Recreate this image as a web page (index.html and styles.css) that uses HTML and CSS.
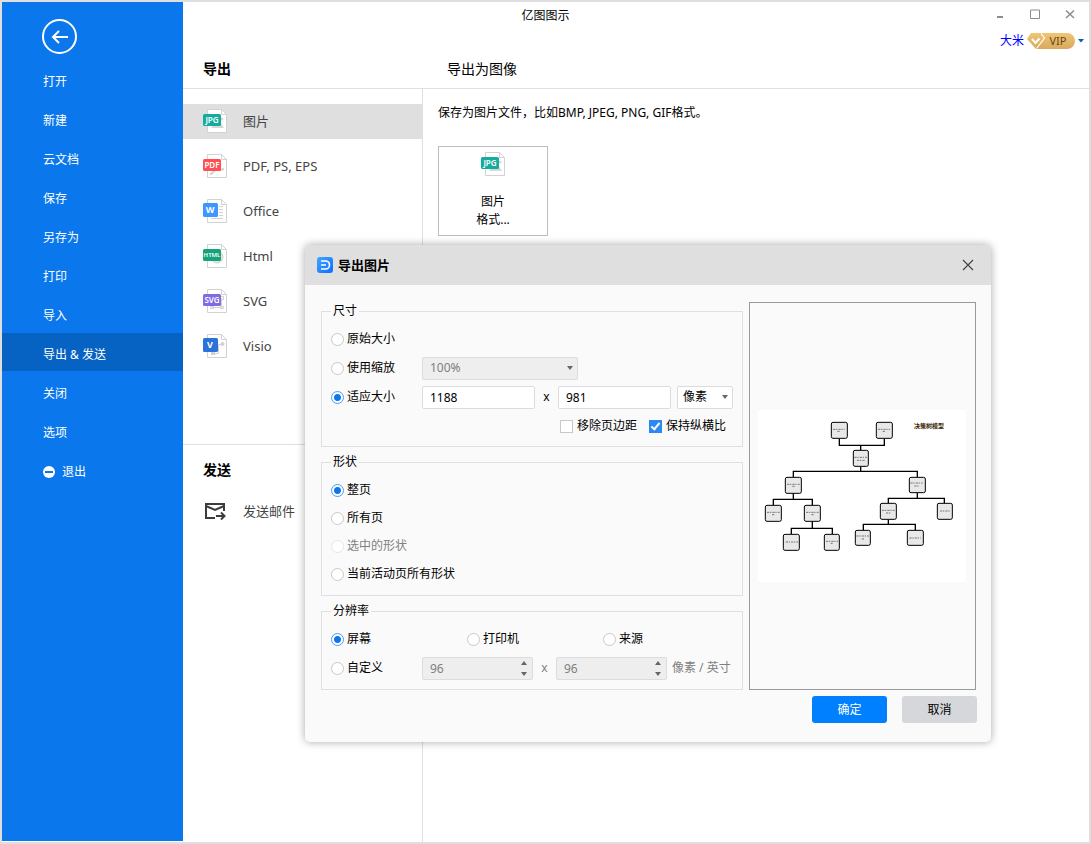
FILE: index.html
```
<!DOCTYPE html>
<html lang="zh-CN">
<head>
    <meta charset="UTF-8">
    <meta name="viewport" content="width=device-width, initial-scale=1.0">
    <title>亿图图示</title>
    <link rel="stylesheet" href="styles.css">
</head>
<body>
    <!-- Shared icon shapes -->
    <svg class="sprite" aria-hidden="true">
        <symbol id="page" viewBox="0 0 24 24">
            <path d="M4.500 .5H18.500L23.500 5.500V23.500H4.500Z" fill="#fff" stroke="#d2d2d2"/>
            <path d="M18.500 .5V5.500H23.500" fill="none" stroke="#d2d2d2"/>
        </symbol>
        <symbol id="picture" viewBox="0 0 24 24">
            <use href="#page"/>
            <path d="M8 19L13 12L16 16L18 14L21 19Z" fill="#d8d8d8"/>
            <circle cx="19" cy="10" r="1.500" fill="#d8d8d8"/>
            <rect y="5" width="18" height="12" rx="1.500" fill="#13ada0"/>
        </symbol>
    </svg>

    <div class="app">
        <nav class="sidebar">
            <button class="back" aria-label="返回">
                <svg width="35" height="35" viewBox="0 0 35 35" fill="none" stroke="#fff" stroke-width="2">
                    <circle cx="17.500" cy="17.500" r="16.500"/>
                    <path d="M26 18H11M17 12L11 18L17 24"/>
                </svg>
            </button>
            <a href="#">打开</a>
            <a href="#">新建</a>
            <a href="#">云文档</a>
            <a href="#">保存</a>
            <a href="#">另存为</a>
            <a href="#">打印</a>
            <a href="#">导入</a>
            <a href="#" class="active">导出 &amp; 发送</a>
            <a href="#">关闭</a>
            <a href="#">选项</a>
            <a href="#" class="exit">
                <svg width="12" height="12" viewBox="0 0 12 12">
                    <circle cx="6" cy="6" r="6" fill="#fff"/>
                    <rect x="2" y="5" width="8" height="2" fill="#0a77ec"/>
                </svg>
                退出
            </a>
        </nav>

        <div class="main">
            <header class="header">
                <div class="titlebar">
                    <span class="title">亿图图示</span>
                    <div class="controls">
                        <button aria-label="最小化"><svg width="10" height="10"><path d="M2 8H8" stroke="#8c8c8c" stroke-width="2"/></svg></button>
                        <button aria-label="最大化"><svg width="10" height="10"><path d="M.5 1H9.500V9.500H.5Z" fill="none" stroke="#8c8c8c"/></svg></button>
                        <button aria-label="关闭"><svg width="10" height="10"><path d="M1 1.500L9 9M9 1.500L1 9" stroke="#8c8c8c" stroke-width="1.500"/></svg></button>
                    </div>
                </div>
                <div class="account">
                    <a href="#">大米</a>
                    <svg width="48" height="16" viewBox="0 0 48 16">
                        <defs>
                            <linearGradient id="gold" x1="0" y1="0" x2="0" y2="1">
                                <stop offset="0" stop-color="#f0c573"/>
                                <stop offset="1" stop-color="#d9a95f"/>
                            </linearGradient>
                        </defs>
                        <path d="M4 0H40A8 8 0 0 1 40 16H9L0 6Z" fill="url(#gold)"/>
                        <path d="M14 .5L17.500 5L9.500 15.500" fill="none" stroke="#fff" stroke-width="1.200"/>
                        <path d="M5 6L8.500 10L12.500 5.500" fill="none" stroke="#fff" stroke-width="2"/>
                        <text x="31" y="12" class="vip-text">VIP</text>
                    </svg>
                    <svg width="6" height="4"><path d="M0 0H6L3 3.500Z" fill="#0a5cad"/></svg>
                </div>
                <div class="headings">
                    <h2>导出</h2>
                    <h3>导出为图像</h3>
                </div>
            </header>

            <div class="content">
                <aside class="types">
                    <div class="group">
                        <a href="#" class="type active">
                            <svg width="24" height="24" viewBox="0 0 24 24">
                                <use href="#picture"/>
                                <text x="9" y="14" class="badge-text">JPG</text>
                            </svg>
                            图片
                        </a>
                        <a href="#" class="type">
                            <svg width="24" height="24" viewBox="0 0 24 24">
                                <use href="#page"/>
                                <path d="M7 20C10 20 12 16 13 14C15 17 18 16 21 15" fill="none" stroke="#d2d2d2" stroke-width="2"/>
                                <rect y="5" width="18" height="12" rx="1.500" fill="#ff4f52"/>
                                <text x="9" y="14" class="badge-text">PDF</text>
                            </svg>
                            PDF, PS, EPS
                        </a>
                        <a href="#" class="type">
                            <svg width="24" height="24" viewBox="0 0 24 24">
                                <use href="#page"/>
                                <path d="M16 7.500H20M16 10.500H20M16 13.500H20M16 16.500H20M8 19.500H20" stroke="#d2d2d2"/>
                                <rect y="4" width="15" height="14" rx="1.500" fill="#3e97fd"/>
                                <text x="7" y="14" class="badge-text large">W</text>
                            </svg>
                            Office
                        </a>
                        <a href="#" class="type">
                            <svg width="24" height="24" viewBox="0 0 24 24">
                                <use href="#page"/>
                                <circle cx="14" cy="13" r="6" fill="#e4e4e4" stroke="#d2d2d2"/>
                                <rect y="5" width="18" height="12" rx="1.500" fill="#14a37a"/>
                                <text x="9" y="13" class="badge-text small">HTML</text>
                            </svg>
                            Html
                        </a>
                        <a href="#" class="type">
                            <svg width="24" height="24" viewBox="0 0 24 24">
                                <use href="#page"/>
                                <path d="M9.500 9.500H18.500V18.500H9.500ZM7.500 17.500H10.500V19.500H7.500ZM17.500 17.500H20.500V19.500H17.500ZM17.500 7.500H20.500V10.500H17.500Z" fill="none" stroke="#d2d2d2"/>
                                <rect y="5" width="18" height="12" rx="1.500" fill="#806be5"/>
                                <text x="9" y="14" class="badge-text">SVG</text>
                            </svg>
                            SVG
                        </a>
                        <a href="#" class="type">
                            <svg width="24" height="24" viewBox="0 0 24 24">
                                <use href="#page"/>
                                <path d="M9 19.500H15.500V10.500H19.500V9" fill="none" stroke="#d2d2d2"/>
                                <circle cx="19.500" cy="10" r="2" fill="#d2d2d2"/>
                                <rect x="8" y="18" width="4" height="3" fill="#d2d2d2"/>
                                <rect y="4" width="15" height="14" rx="1.500" fill="#2b73d9"/>
                                <text x="7" y="14" class="badge-text large">V</text>
                            </svg>
                            Visio
                        </a>
                    </div>
                    <div class="group send">
                        <h2>发送</h2>
                        <a href="#" class="type">
                            <svg width="24" height="24" viewBox="0 0 24 24" fill="none" stroke="#3c3c3c" stroke-width="2">
                                <path d="M12 19H3V5H21V12"/>
                                <path d="M3 7L12 11L21 7"/>
                                <path d="M13 17H21M18 13.500L21.500 17L18 20.500"/>
                            </svg>
                            发送邮件
                        </a>
                    </div>
                </aside>
                <main class="pane">
                    <p>保存为图片文件，比如BMP, JPEG, PNG, GIF格式。</p>
                    <button class="card">
                        <svg width="24" height="24" viewBox="0 0 24 24">
                            <use href="#picture"/>
                            <text x="9" y="14" class="badge-text">JPG</text>
                        </svg>
                        <span>图片<br>格式...</span>
                    </button>
                </main>
            </div>
        </div>

        <form class="dialog" role="dialog" aria-labelledby="dialogTitle">
            <div class="dialog-header">
                <svg width="16" height="16" viewBox="0 0 16 16">
                    <defs>
                        <linearGradient id="logo" x1="0" y1="0" x2="1" y2="1">
                            <stop offset="0" stop-color="#42a5ff"/>
                            <stop offset="1" stop-color="#0c6cff"/>
                        </linearGradient>
                    </defs>
                    <rect width="16" height="16" rx="3" fill="url(#logo)"/>
                    <path d="M4 4H8.500A4 4 0 0 1 8.500 12H4M4 8H9" fill="none" stroke="#fff" stroke-width="1.600"/>
                </svg>
                <h1 id="dialogTitle">导出图片</h1>
                <button type="button" aria-label="关闭"><svg width="12" height="12"><path d="M1 1L11 11M11 1L1 11" stroke="#444" stroke-width="1.200"/></svg></button>
            </div>

            <div class="dialog-body">
                <div class="options">
                    <fieldset>
                        <legend>尺寸</legend>
                        <div class="row">
                            <label><input type="radio" name="size">原始大小</label>
                        </div>
                        <div class="row">
                            <label class="first"><input type="radio" name="size">使用缩放</label>
                            <span class="select scale">
                                <select aria-label="缩放" disabled><option>100%</option></select>
                            </span>
                        </div>
                        <div class="row">
                            <label class="first"><input type="radio" name="size" checked>适应大小</label>
                            <input type="text" class="field" value="1188" aria-label="宽度">
                            <span class="times">x</span>
                            <input type="text" class="field" value="981" aria-label="高度">
                            <span class="select unit">
                                <select aria-label="单位"><option>像素</option></select>
                            </span>
                        </div>
                        <div class="row checks">
                            <label><input type="checkbox">移除页边距</label>
                            <label><input type="checkbox" checked>保持纵横比</label>
                        </div>
                    </fieldset>

                    <fieldset class="shape">
                        <legend>形状</legend>
                        <div class="row"><label><input type="radio" name="shape" checked>整页</label></div>
                        <div class="row"><label><input type="radio" name="shape">所有页</label></div>
                        <div class="row"><label class="disabled"><input type="radio" name="shape" disabled>选中的形状</label></div>
                        <div class="row"><label><input type="radio" name="shape">当前活动页所有形状</label></div>
                    </fieldset>

                    <fieldset class="resolution">
                        <legend>分辨率</legend>
                        <div class="row thirds">
                            <label><input type="radio" name="dpi" checked>屏幕</label>
                            <label><input type="radio" name="dpi">打印机</label>
                            <label><input type="radio" name="dpi">来源</label>
                        </div>
                        <div class="row">
                            <label class="first"><input type="radio" name="dpi">自定义</label>
                            <span class="spin">
                                <input type="number" class="field" value="96" aria-label="水平分辨率" disabled>
                                <svg width="8" height="16"><path d="M1 5H7L4 1ZM1 12H7L4 16Z" fill="#666"/></svg>
                            </span>
                            <span class="times">x</span>
                            <span class="spin">
                                <input type="number" class="field" value="96" aria-label="垂直分辨率" disabled>
                                <svg width="8" height="16"><path d="M1 5H7L4 1ZM1 12H7L4 16Z" fill="#666"/></svg>
                            </span>
                            <span class="per-inch">像素 / 英寸</span>
                        </div>
                    </fieldset>
                </div>

                <div class="preview">
                    <svg width="208" height="172" viewBox="0 0 624 516">
                        <rect width="624" height="516" fill="#fff"/>
                        <text x="513" y="54" class="chart-title">决策树模型</text>
                        <path class="links" d="M244 86V106H379V86M308 106V121M308 170V184M106 202V184H478V202M106 250V268M46 286V268H163V286M163 334V355M100 373V355H223V373M478 248V265M391 280V265H559V280M391 329V343M316 361V343H472V361"/>
                        <g class="nodes">
                            <rect x="220" y="37" width="48" height="48" rx="5"/>
                            <rect x="355" y="37" width="48" height="48" rx="5"/>
                            <rect x="286" y="121" width="45" height="48" rx="5"/>
                            <rect x="82" y="202" width="48" height="48" rx="5"/>
                            <rect x="454" y="202" width="48" height="46" rx="5"/>
                            <rect x="22" y="286" width="48" height="48" rx="5"/>
                            <rect x="139" y="286" width="48" height="48" rx="5"/>
                            <rect x="367" y="280" width="48" height="48" rx="5"/>
                            <rect x="538" y="280" width="45" height="48" rx="5"/>
                            <rect x="76" y="373" width="48" height="48" rx="5"/>
                            <rect x="199" y="373" width="45" height="48" rx="5"/>
                            <rect x="292" y="361" width="45" height="45" rx="5"/>
                            <rect x="448" y="361" width="48" height="45" rx="5"/>
                        </g>
                        <path class="lines" d="M225 58H260M238 64H246M360 58H396M374 64H382M289 142H327M297 151H320M87 223H125M103 229H112M457 219H494M469 228H485M27 307H65M42 314H50M144 307H182M160 314H167M372 301H410M384 309H398M546 303H576M83 396H121M204 394H240M218 400H224M295 378H333M311 387H318M454 384H488"/>
                    </svg>
                </div>
            </div>

            <div class="dialog-footer">
                <button type="submit" class="primary">确定</button>
                <button type="button">取消</button>
            </div>
        </form>
    </div>
</body>
</html>
```
FILE: styles.css
```
* {
    box-sizing: border-box;
}
body {
    margin: 0;
    font-family: "Noto Sans", "Noto Sans CJK SC", sans-serif;
    font-size: 12px;
    line-height: 18px;
    color: #000;
}
h1, h2, h3, p {
    margin: 0;
}
a {
    text-decoration: none;
}
button, input, select {
    font: inherit;
    color: inherit;
}
button {
    border: none;
    background: none;
    padding: 0;
    cursor: pointer;
}
svg {
    display: block;
    flex: none;
}
.sprite {
    display: none;
}
.app {
    position: relative;
    display: flex;
    min-height: 100vh;
    border: 2px solid #dfdfdf;
    background-color: #fff;
}

/* Sidebar */
.sidebar {
    width: 181px;
    flex: none;
    margin-bottom: 1px;
    background-color: #0a77ec;
}
.back {
    display: block;
    margin: 17px 0 6px 40px;
}
.sidebar a {
    display: flex;
    align-items: center;
    gap: 7px;
    height: 38px;
    margin-bottom: 1px;
    padding: 6px 0 0 41px;
    color: #fff;
}
.sidebar a.active {
    background-color: #0663c4;
}

/* Header */
.main {
    flex: 1;
    display: flex;
    flex-direction: column;
}
.header {
    border-bottom: 1px solid #dfdfdf;
}
.titlebar {
    display: flex;
    align-items: center;
    height: 27px;
}
.title {
    flex: 1;
    text-align: center;
}
.controls {
    display: flex;
    justify-content: flex-end;
    gap: 25px;
    width: 181px;
    padding: 0 14px 4px 0;
}
.account {
    display: flex;
    align-items: center;
    justify-content: flex-end;
    gap: 3px;
    height: 24px;
    padding-right: 5px;
}
.account a {
    color: #00f;
}
.vip-text {
    font-size: 11px;
    text-anchor: middle;
    fill: #6b4512;
}
.headings {
    display: flex;
    height: 35px;
    line-height: 32px;
    padding-left: 20px;
}
.headings h2 {
    width: 244px;
}
h2, h3 {
    font-size: 14px;
}
h3 {
    font-weight: normal;
}

/* Export types */
.content {
    flex: 1;
    display: flex;
}
.types {
    width: 240px;
    flex: none;
    border-right: 1px solid #dfdfdf;
}
.group {
    display: flex;
    flex-direction: column;
    gap: 10px;
    padding: 15px 0 80px;
}
.type {
    display: flex;
    align-items: center;
    gap: 16px;
    height: 35px;
    padding: 0 0 1px 20px;
    font-size: 13px;
    color: #444;
}
.type.active {
    background-color: #dfdfdf;
}
.send {
    gap: 15px;
    padding-top: 16px;
    border-top: 1px solid #dfdfdf;
}
.send h2 {
    padding-left: 20px;
}
.badge-text {
    font-size: 8px;
    font-weight: 600;
    text-anchor: middle;
    fill: #fff;
}
.badge-text.small {
    font-size: 6px;
}
.badge-text.large {
    font-size: 9px;
    font-weight: 700;
}
.pane {
    flex: 1;
    padding: 15px;
}
.card {
    display: flex;
    flex-direction: column;
    align-items: center;
    gap: 17px;
    width: 110px;
    height: 90px;
    margin-top: 24px;
    padding-top: 5px;
    border: 1px solid #bdbdbd;
}

/* Export dialog */
.dialog {
    position: absolute;
    top: 243px;
    left: 303px;
    width: 686px;
    border-radius: 5px;
    background-color: #fafafa;
    box-shadow: 0 0 8px rgba(0, 0, 0, 0.35);
}
.dialog-header {
    display: flex;
    align-items: center;
    gap: 5px;
    height: 40px;
    padding: 0 17px 0 12px;
    border-radius: 5px 5px 0 0;
    background-color: #dfdfdf;
}
.dialog-header h1 {
    flex: 1;
    font-size: 13px;
}
.dialog-body {
    display: flex;
    gap: 6px;
    padding: 17px 15px 0 16px;
}
.options {
    display: flex;
    flex-direction: column;
    gap: 6px;
    width: 422px;
}
fieldset {
    margin: 0;
    padding: 5px 9px 6px;
    border: 1px solid #dfdfdf;
}
fieldset.shape, fieldset.resolution {
    padding-bottom: 7px;
}
legend {
    padding: 0 2px;
}
.row {
    display: flex;
    align-items: center;
    height: 28px;
}
.row + .row {
    margin-top: 1px;
}
.shape .row + .row {
    margin-top: 0;
}
label {
    display: flex;
    align-items: center;
    gap: 3px;
}
label.first {
    width: 91px;
}
label.disabled, .times, .per-inch {
    color: #808080;
}
input[type="radio"], input[type="checkbox"] {
    appearance: none;
    width: 13px;
    height: 13px;
    margin: 0;
    border: 1px solid #c8c8c8;
    background-color: #fff;
}
input[type="radio"] {
    border-radius: 50%;
}
input[type="radio"]:checked {
    border-color: #4a9bf5;
    background-image: radial-gradient(circle, #0a77ec 3px, transparent 4px);
}
input[type="radio"]:disabled {
    border-color: #e6e6e6;
}
.checks {
    justify-content: flex-end;
    gap: 12px;
    padding-right: 7px;
}
.checks label {
    gap: 4px;
}
input[type="checkbox"]:checked {
    position: relative;
    border-color: #2b8af2;
    background-color: #2b8af2;
}
input[type="checkbox"]:checked::after {
    content: "";
    position: absolute;
    top: 0;
    left: 3px;
    box-sizing: border-box;
    width: 5px;
    height: 9px;
    border: solid #fff;
    border-width: 0 2px 2px 0;
    transform: rotate(40deg);
}
.field, select {
    appearance: none;
    width: 113px;
    height: 23px;
    margin: 0;
    padding: 0 7px;
    border: 1px solid #dcdcdf;
    border-radius: 2px;
    background-color: #fff;
}
.field:disabled, select:disabled {
    background-color: #eee;
    color: #808080;
    opacity: 1;
}
input[type="number"] {
    appearance: textfield;
}
.select {
    position: relative;
}
.select::after {
    content: "";
    position: absolute;
    top: 9px;
    right: 5px;
    border: solid transparent;
    border-width: 4px 3px 0;
    border-top-color: #666;
}
.select select {
    display: block;
    width: 100%;
}
.scale {
    width: 156px;
}
.unit {
    width: 56px;
    margin-left: 6px;
}
.unit select {
    padding: 0 5px;
}
.times {
    width: 23px;
    text-align: center;
}
.field + .times {
    color: #000;
}
.thirds {
    display: grid;
    grid-template-columns: 136px 136px 1fr;
}
.spin {
    position: relative;
}
.spin .field {
    display: block;
    width: 111px;
}
.spin svg {
    position: absolute;
    top: 3px;
    right: 5px;
}
.per-inch {
    margin-left: 5px;
}
.preview {
    flex: 1;
    display: flex;
    align-items: center;
    justify-content: center;
    padding-right: 2px;
    border: 1px solid #999;
}
.chart-title {
    font-size: 18px;
    font-weight: bold;
    text-anchor: middle;
    fill: #3c1e00;
}
.links {
    fill: none;
    stroke: #000;
    stroke-width: 4;
}
.nodes {
    fill: #e8e8e8;
    stroke: #000;
    stroke-width: 3;
}
.lines {
    fill: none;
    stroke: #777;
    stroke-width: 3;
    stroke-dasharray: 7 2 4 3;
}
.dialog-footer {
    display: flex;
    justify-content: flex-end;
    gap: 15px;
    padding: 6px 14px 19px;
}
.dialog-footer button {
    width: 75px;
    height: 27px;
    border-radius: 3px;
    background-color: #d6d7db;
}
.dialog-footer .primary {
    background-color: #007fff;
    color: #fff;
}
```
